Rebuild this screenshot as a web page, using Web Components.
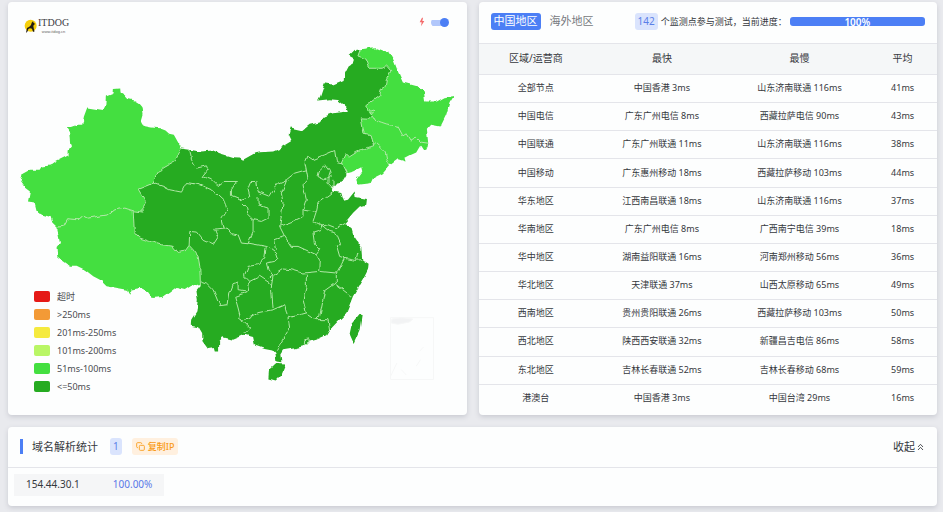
<!DOCTYPE html>
<html lang="zh-CN">
<head>
<meta charset="utf-8">
<title>ITDOG</title>
<style>
body{margin:0;padding:2px 6px 6px 8px;background:#e9eaee;color:#35383d;font-family:"Noto Sans","Noto Sans CJK SC",sans-serif;font-size:9px;--blue:#4c7ff5;--line:#e4e5ea}
</style>
</head>
<body>
<speed-page></speed-page>
<script>
const define = (name, html, setup) => {
  const t = document.createElement('template');
  t.innerHTML = '<style>*{box-sizing:border-box}button{font:inherit;color:inherit;background:none;border:0;margin:0;padding:0;cursor:pointer}</style>' + html;
  customElements.define(name, class extends HTMLElement {
    constructor() {
      super();
      this.attachShadow({mode: 'open'}).append(t.content.cloneNode(true));
    }
    connectedCallback() { if (setup) setup(this.shadowRoot, this); }
  });
};

define('panel-card', `<style>:host{display:block;background:#fdfefe;border-radius:4px;box-shadow:0 2px 5px #c9cbd2;min-width:0}</style><slot></slot>`);

define('count-badge', `<style>:host{display:inline-flex;align-items:center;height:17px;padding:0 3px;border-radius:3px;background:#dae4fd;color:#5a80e8;font-size:10px;line-height:17px}</style><slot></slot>`);

define('site-logo', `<style>:host{display:flex;align-items:center;gap:1px;color:#3c3c44;font-family:"Liberation Serif",serif}svg{width:13px;height:14px}b{display:block;font-size:10px;line-height:12px;font-weight:400}small{display:block;font:4px/5px "Liberation Sans",sans-serif;text-align:center;color:#666}</style>
<svg viewBox="0 0 39 42" aria-hidden="true"><circle cx="20" cy="20" r="18" fill="#f6cf0b"/><path d="M27 7l2 5 4 2-3 4-2 2 1 7 2 8v3h-4l-3-9-6-1-5 2-2 7-5 5 1-6 2-9 7-4 5-5 2-7z" fill="#221c12"/></svg>
<span><b>ITDOG</b><small>www.itdog.cn</small></span>`);

define('turbo-switch', `<style>:host{display:block}label{display:flex;align-items:center;gap:6px}svg{width:6px;height:10px}
input{appearance:none;margin:0;width:18px;height:9px;display:flex;align-items:center;justify-content:flex-end;background:linear-gradient(#b1c7fb,#b1c7fb) 0 2px/14px 6px no-repeat;border-radius:5px}
input::before{content:"";width:9px;height:9px;border-radius:50%;background:var(--blue)}</style>
<label><svg viewBox="0 0 18 30" aria-hidden="true"><path d="M9 2L2 16h6L6 28l10-16h-6l2-10z" fill="#f46a6a"/></svg><input type="checkbox" checked aria-label="快速模式"></label>`);

define('map-legend', `<style>:host{display:block}ul{margin:0;padding:0;list-style:none}li{display:flex;align-items:center;gap:7px;height:18px;line-height:18px;color:#4a4c50}i{width:16px;height:11px;border-radius:2px}</style><ul></ul>`,
root => {
  root.querySelector('ul').innerHTML = [['#e51a17','超时'],['#f39a36','>250ms'],['#f5ea3e','201ms-250ms'],['#b9f665','101ms-200ms'],['#44df40','51ms-100ms'],['#26ab21','<=50ms']]
    .map(([c, t]) => `<li><i style="background:${c}"></i>${t.replace('<', '&lt;')}</li>`).join('');
});

define('china-map', `<style>:host{display:block}svg{display:block;width:100%;height:auto}
.d{fill:#26ab21}.l{fill:#44df40}.b{fill:none;stroke:#b0e8a6;stroke-width:3;stroke-linejoin:round}</style>
<svg viewBox="24 6 1377 1239" role="img" aria-label="中国地区">
<defs><filter id="rough" x="0" y="0" width="100%" height="100%" color-interpolation-filters="sRGB"><feTurbulence type="fractalNoise" baseFrequency=".05" numOctaves="1" seed="4" result="n"/><feDisplacementMap in="SourceGraphic" in2="n" scale="15" xChannelSelector="R" yChannelSelector="G"/></filter></defs>
<g filter="url(#rough)">
<path class="d" d="M545 446L570 450 600 455 640 452 660 460 700 472 720 473 730 480 765 460 780 457 820 455 840 447 877 424 867 403 873 383 910 391 930 375 960 368 975 350 1000 340 1045 335 1040 320 1015 300 990 298 955 302 962 288 975 250 1000 254 1032 240 1035 220 1047 197 1062 187 1062 172 1050 165 1065 150 1082 148 1120 170 1180 200 1180 300 1130 440 1040 500 1040 525 1028 545 1010 548 1000 560 1000 575 1025 580 1032 603 1045 600 1065 575 1068 592 1102 598 1100 615 1080 620 1060 640 1035 670 1055 685 1062 710 1085 745 1088 780 1107 792 1105 810 1090 840 1060 890 1050 915 1040 940 1015 965 988 993 980 1007 950 1020 925 1027 910 1040 890 1045 850 1052 842 1065 845 1088 830 1086 827 1060 818 1050 795 1045 765 1035 760 1012 735 1005 720 1012 700 1020 670 1013 658 1025 658 1056 648 1056 645 1045 625 1048 608 1025 607 1003 595 983 573 978 574 960 590 935 594 900 590 875 602 860 560 800 400 760 380 640 380 560 440 520 500 460Z"/>
<path class="d" d="M808 1110L830 1090 858 1092 845 1125 828 1143 806 1137ZM1082 943L1086 950 1080 990 1062 1030 1050 1003 1056 975Z"/>
<path class="l" d="M545 446L535 428 522 405 508 402 497 392 480 385 455 383 428 378 424 370 431 345 428 322 418 310 405 302 385 297 374 285 362 278 361 266 342 267 341 281 318 290 316 318 310 330 295 328 262 323 252 350 247 375 232 375 200 386 208 398 210 425 213 440 203 452 203 466 170 483 150 497 128 500 122 510 90 510 68 522 62 545 75 564 90 575 84 605 104 608 112 640 155 652 160 668 174 682 190 680 203 657 235 660 250 647 265 655 325 645 345 630 375 625 400 633 430 637 428 620 437 605 415 568 460 550 475 520 490 505 525 485 540 455Z"/>
<path class="l" d="M174 682L190 680 203 657 235 660 250 647 265 655 325 645 345 630 375 625 400 633 402 670 403 695 420 715 450 725 485 735 520 740 535 758 555 755 568 737 580 750 595 770 600 800 602 830 600 855 590 860 575 855 555 868 530 862 510 878 490 892 458 895 445 878 420 865 395 870 388 885 380 870 350 865 320 860 300 840 280 830 255 810 230 798 210 798 185 780 172 770 170 742 180 730 175 705 172 692Z"/>
<path class="l" d="M1082 148L1125 142 1150 152 1170 160 1182 180 1195 215 1210 248 1250 258 1273 275 1277 305 1312 305 1335 292 1363 288 1350 310 1340 345 1323 380 1295 375 1282 390 1286 430 1284 442 1270 450 1262 438 1250 458 1235 465 1215 475 1218 485 1195 478 1170 497 1150 520 1120 535 1113 550 1075 555 1070 540 1088 515 1085 502 1060 515 1040 520 1030 500 1025 487 1037 462 1048 472 1070 458 1105 442 1122 438 1115 405 1093 400 1085 357 1105 358 1120 348 1112 345 1098 318 1140 287 1145 268 1156 262 1160 240 1174 213 1160 197 1145 205 1110 205 1100 178 1075 168Z"/>
<g class="b">
<path d="M1082 148L1075 168 1100 178 1110 205 1145 205 1160 197 1174 213 1160 240 1156 262 1145 268 1140 287 1098 318 1110 334 1122 330 1120 340 1110 338 1120 348 1105 358 1085 357 1093 400 1115 405 1122 438 1105 442 1070 458 1048 472 1037 462 1025 487 1030 500 1040 520M1120 348L1130 362 1145 367 1160 372 1195 380 1210 408 1220 402 1232 422 1250 412 1265 427 1286 430M1122 438L1130 430 1146 445 1157 455 1162 480 1170 497"/>
<path d="M174 682L190 680 203 657 235 660 250 647 265 655 325 645 345 630 375 625 400 633"/>
<path d="M460 550L490 560 510 570 545 577 560 548 600 555 640 572 675 605 682 632 665 660 670 685 645 688 655 712 640 735 610 722 590 697 570 695 568 737M400 633L402 670 403 695 420 715 450 725 485 735 520 740 535 758 555 755 568 737 580 750 595 770 600 800 602 860M460 550L415 568 437 605 428 620 430 637 400 633M460 550L475 520 490 505 525 485 540 455 545 446"/>
<g transform="translate(510 390)"><path d="M60 60L65 90 80 115 110 108 115 120 100 140 125 150 145 170 165 155 200 155 185 180 185 200 210 210 240 200 235 180 245 155 258 155 262 185 300 200 325 160 350 150 375 130 410 120 405 95 412 78 430 90 465 75 495 62 500 95 520 100M160 295L175 300 185 312 205 315 215 340 235 342 250 305 250 270M210 210L230 230 235 255 250 270 275 275 295 265 295 235 265 225 265 200M235 340L290 350 300 355 320 370 325 385 315 395 290 400M350 150L335 190 340 220 335 260 330 290 345 320 315 330 320 360M410 120L415 150 400 165 410 210 400 240 400 260 370 275 330 290M402 238L440 245 445 220 470 200 490 185M450 120L465 105 480 125 485 140 465 150 445 140ZM480 125L475 140 475 160 490 175 490 150M440 245L430 275 460 290 455 302 430 310 435 345 450 360 440 375 385 350 365 350 345 320M455 290L475 285 500 295 525 280M460 290L480 305 500 310 515 345 500 345 510 380 525 385 515 405 505 425M440 375L452 395 450 425M520 385L555 392 575 390M565 370L560 390M300 445L340 418 365 420 400 430 450 425M290 350L285 385 265 405 235 410 225 435"/></g>
<g transform="translate(510 750)"><path d="M225 75L225 80 240 95 270 80 300 100 305 110M290 40L295 60 310 80 305 110 310 175M450 65L500 70 500 100 465 125 450 200 440 210M410 75L410 110 400 150 410 190M240 95L235 125 195 140 205 175 215 215 260 190 310 180 345 165 355 205 410 190 440 210 475 210 480 240M500 105L545 140M505 65L500 70M95 95L110 100 130 120 150 168 175 165 180 130 190 105 205 100 205 120 235 125M205 205L225 220 240 235 225 250M355 205L360 235 330 285 320 300M405 270L418 268 418 280 404 284Z"/></g>
</g></g>
<g fill="none" stroke="#f6f7f7" stroke-width="3"><path d="M1173 954H1302V1140H1173ZM1173 1130L1192 1090M1205 1110L1220 1126M1250 1100L1263 1080M1260 1055L1272 1042"/><path fill="#f2f3f4" d="M1177 958L1205 954 1240 958 1230 967 1195 974 1175 970Z"/></g>
</svg>`);

define('map-panel', `<style>:host{display:block;position:relative}site-logo{position:absolute;left:16px;top:15px}turbo-switch{position:absolute;right:18px;top:15px}map-legend{position:absolute;left:26px;bottom:19px}</style>
<china-map></china-map><site-logo></site-logo><turbo-switch></turbo-switch><map-legend></map-legend>`);

define('test-progress', `<style>:host{display:flex;align-items:center;flex:1;gap:3px;white-space:nowrap}.bar{flex:1;margin-right:12px;height:9px;border-radius:3px;background:var(--blue);color:#fff;font-weight:600;font-size:10px;line-height:10px;text-align:center}</style>
<count-badge>142</count-badge><span>个监测点参与测试，当前进度：</span><div class="bar" role="progressbar" aria-valuenow="100">100%</div>`);

define('region-tabs', `<style>:host{display:flex;gap:6px;font-size:11px}button{height:17px;line-height:15px;padding:0 3px 2px;border-radius:3px;color:#777a80;white-space:nowrap}.on{background:var(--blue);color:#fff}</style>
<button class="on">中国地区</button><button>海外地区</button>`);

define('result-table', `<style>:host{display:block}table{width:100%;height:100%;border-collapse:collapse;table-layout:fixed;text-align:center}
th{height:31px;font-weight:400;font-size:10px;background:#f5f7f8;border-top:1px solid var(--line)}td,th{padding:0 0 1px;line-height:14px}th{padding-bottom:3px}td{border-top:1px solid var(--line)}
th:nth-child(1){width:25%}th:nth-child(2),th:nth-child(3){width:30%}</style>
<table><thead><tr><th>区域/运营商</th><th>最快</th><th>最慢</th><th>平均</th></tr></thead><tbody></tbody></table>`,
root => {
  root.querySelector('tbody').innerHTML = `全部节点|中国香港 3ms|山东济南联通 116ms|41ms
中国电信|广东广州电信 8ms|西藏拉萨电信 90ms|43ms
中国联通|广东广州联通 11ms|山东济南联通 116ms|38ms
中国移动|广东惠州移动 18ms|西藏拉萨移动 103ms|44ms
华东地区|江西南昌联通 18ms|山东济南联通 116ms|37ms
华南地区|广东广州电信 8ms|广西南宁电信 39ms|18ms
华中地区|湖南益阳联通 16ms|河南郑州移动 56ms|36ms
华北地区|天津联通 37ms|山西太原移动 65ms|49ms
西南地区|贵州贵阳联通 26ms|西藏拉萨移动 103ms|50ms
西北地区|陕西西安联通 32ms|新疆昌吉电信 86ms|58ms
东北地区|吉林长春联通 52ms|吉林长春移动 68ms|59ms
港澳台|中国香港 3ms|中国台湾 29ms|16ms`.split('\n').map(r => '<tr>' + r.split('|').map(c => `<td>${c}</td>`).join('') + '</tr>').join('');
});

define('result-panel', `<style>:host{display:flex;flex-direction:column;height:100%;padding-bottom:3px}header{display:flex;align-items:center;height:41px;padding:0 0 2px 12px;gap:38px}result-table{flex:1}</style>
<header><region-tabs></region-tabs><test-progress></test-progress></header><result-table></result-table>`);

define('dns-panel', `<style>:host{display:block}header{display:flex;align-items:center;height:41px;padding:0 13px 0 12px;border-bottom:1px solid var(--line)}
h2{margin:0 12px 0 0;padding-left:9px;border-left:3px solid var(--blue);font-size:11px;font-weight:400;line-height:15px}
.copy{display:flex;align-items:center;gap:3px;height:17px;margin-left:10px;padding:0 4px;border-radius:3px;background:#fff0df;color:#f99b16;font-weight:500}.copy svg{width:9px;height:9px}
.fold{display:flex;align-items:center;gap:2px;margin-left:auto;font-size:11px;line-height:17px}.fold svg{width:7px;height:8px}svg{fill:none;stroke:currentColor}
.ip{display:inline-flex;margin:6px 6px 10px;height:22px;padding:0 12px 2px;gap:33px;align-items:center;background:#f5f6f7;font-size:10px;line-height:20px;vertical-align:top}.ip span{color:#5a78e8}</style>
<header><h2>域名解析统计</h2><count-badge>1</count-badge><button class="copy"><svg viewBox="0 0 27 27" stroke-width="2.6" aria-hidden="true"><rect x="10" y="10" width="15" height="15" rx="3"/><path d="M6 17H5a3 3 0 0 1-3-3V5a3 3 0 0 1 3-3h9a3 3 0 0 1 3 3v1"/></svg>复制IP</button>
<button class="fold">收起<svg viewBox="0 0 21 24" stroke-width="2.6" aria-hidden="true"><path d="M3 12l7.500-8 7.500 8M3 21l7.500-8 7.500 8"/></svg></button></header>
<div class="ip">154.44.30.1<span>100.00%</span></div>`);

define('speed-page', `<style>:host{display:grid;grid-template-columns:1fr 1fr;gap:12px}.wide{grid-column:1/-1}</style>
<panel-card><map-panel></map-panel></panel-card><panel-card><result-panel></result-panel></panel-card><panel-card class="wide"><dns-panel></dns-panel></panel-card>`);
</script>
</body>
</html>
